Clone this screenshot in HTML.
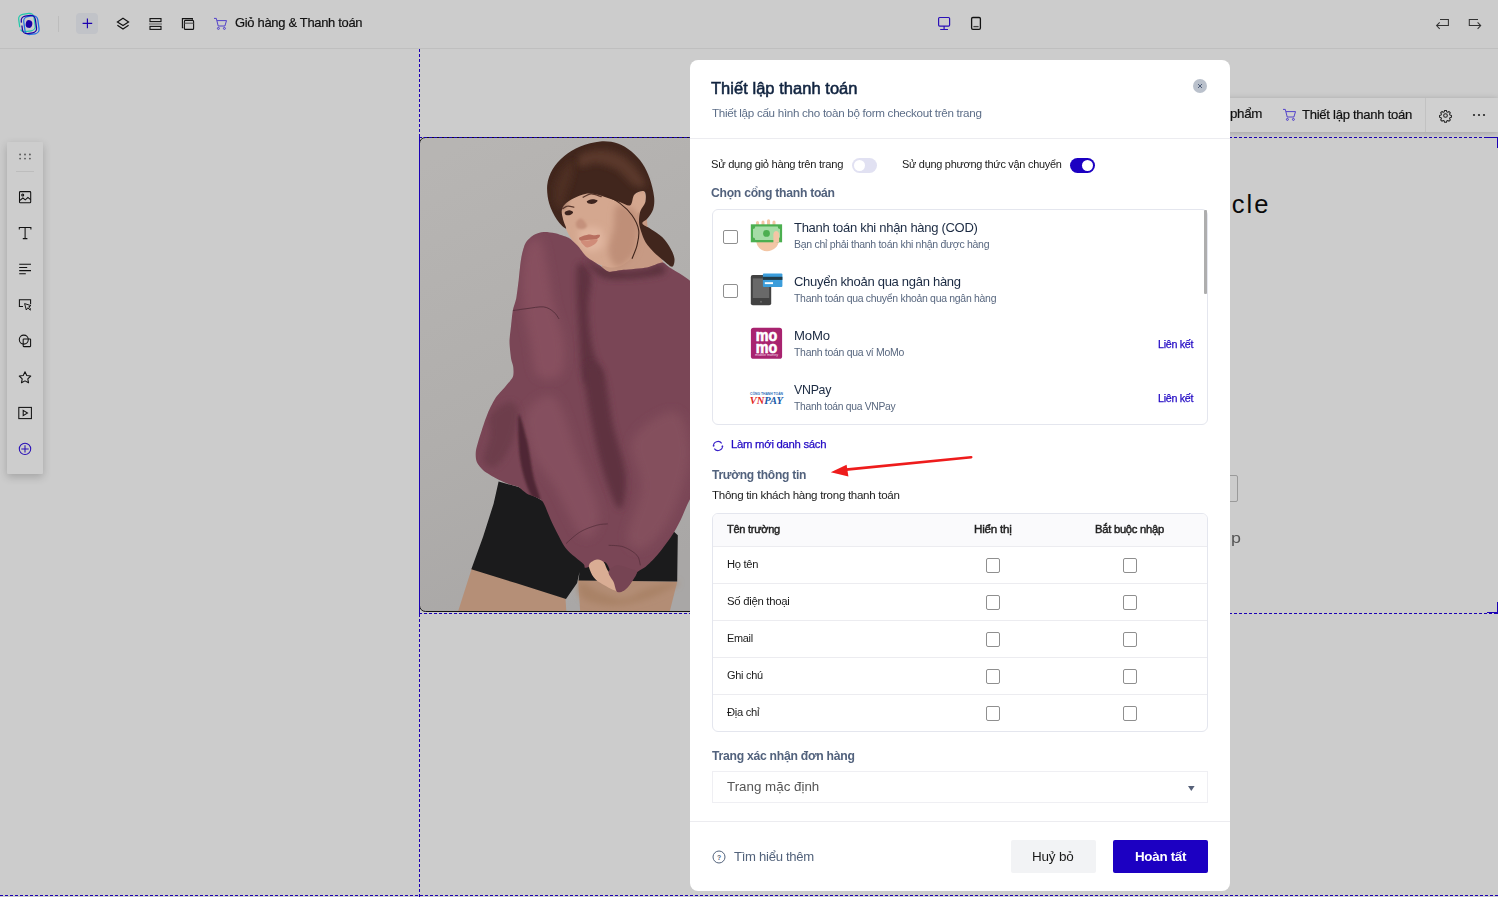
<!DOCTYPE html>
<html lang="vi">
<head>
<meta charset="utf-8">
<title>Thiết lập thanh toán</title>
<style>
*{box-sizing:border-box;margin:0;padding:0}
html,body{width:1498px;height:897px;overflow:hidden}
body{position:relative;background:#cccccc;font-family:"Liberation Sans",sans-serif;color:#111;font-size:12px}
.abs{position:absolute}
svg{display:block;overflow:visible}
/* top bar */
#topbar{position:absolute;left:0;top:0;width:1498px;height:49px;background:#cccccc;border-bottom:1px solid #bfbfbf}
#topbar .ic{position:absolute}
#plusbtn{position:absolute;left:76px;top:13px;width:22px;height:21px;border-radius:4px;background:#c1c3c8}
#pagetitle{position:absolute;left:235.3px;top:15.9px;font-size:13px;line-height:13px;color:#111;-webkit-text-stroke:.2px #111;white-space:nowrap;letter-spacing:-0.3px;transform:scaleX(.995);transform-origin:0 50%}
/* left toolbar */
#ltool{position:absolute;left:7px;top:142px;width:36px;height:332px;background:#cdcdcd;border-radius:1px;box-shadow:0 3px 9px rgba(0,0,0,.2)}
#ltool .ic{position:absolute;left:10px}
/* canvas guides */
.vdash{position:absolute;width:0;border-left:1px dashed #1a00b4}
.hdash{position:absolute;height:0;border-top:1px dashed #1a00b4}
.vd{position:absolute;width:1px;background:repeating-linear-gradient(to bottom,#1a00b4 0 3px,transparent 3px 5px)}
.hd{position:absolute;height:1px;background:repeating-linear-gradient(to right,#1a00b4 0 3px,transparent 3px 5px)}
/* modal */
#modal{position:absolute;left:690px;top:60px;width:540px;height:831px;background:#fff;border-radius:8px;overflow:hidden}
#modal .t{position:absolute;white-space:nowrap}
.h1{left:22px;top:20px;font-size:17px;line-height:20px;font-weight:normal;-webkit-text-stroke:.55px #10233f;color:#10233f;letter-spacing:-0.35px}
.sub{left:22px;top:47px;font-size:11.5px;line-height:14px;color:#5d6e88;letter-spacing:-0.1px}
.hr{position:absolute;left:0;width:540px;height:1px;background:#ececf0}
.lab{font-size:11px;line-height:14px;color:#1a1a1a}
.sec{font-size:12.5px;line-height:15px;font-weight:bold;color:#52627d;letter-spacing:-0.3px}
.tog{position:absolute;width:25px;height:15px;border-radius:7.5px}
.tog i{position:absolute;top:2px;width:11px;height:11px;border-radius:50%;background:#fff}
.box{position:absolute;border:1px solid #e4e6ee;border-radius:6px;background:#fff}
.cb{position:absolute;width:15px;height:14px;border:1px solid #8f8f8f;border-radius:2px;background:#fff}
.pt{font-size:13px;line-height:16px;color:#1b2a42;letter-spacing:-0.15px}
.ps{font-size:10.5px;line-height:13px;color:#58677f;letter-spacing:-0.1px}
.lk{font-size:10.5px;line-height:13px;color:#2209c4;-webkit-text-stroke:.25px #2209c4}
.th{font-size:11px;line-height:14px;font-weight:normal;-webkit-text-stroke:.45px #222;color:#222;letter-spacing:-0.2px}
.td{font-size:11px;line-height:14px;color:#1a1a1a}
.rowline{position:absolute;left:0;width:494px;height:1px;background:#ececf0}
.cb2{position:absolute;width:14px;height:15px;border:1px solid #8f8f8f;border-radius:2px;background:#fff}
</style>
</head>
<body>

<!-- ===== TOP BAR ===== -->
<div id="topbar">
  <!-- logo -->
  <svg class="ic" style="left:17px;top:11px" width="24" height="26" viewBox="17 11 24 26" fill="none">
    <rect x="19.200" y="13.800" width="15.500" height="17.500" rx="4.600" stroke="#20c9aa" stroke-width="1.250" transform="rotate(-8 27 22.500)" stroke-dasharray="40 2.500 30"/>
    <rect x="24.300" y="16.200" width="14.200" height="18" rx="4.600" stroke="#1f6fe3" stroke-width="1.250" transform="rotate(-8 31.400 25.200)"/>
    <rect x="21.800" y="15.600" width="14.200" height="17.800" rx="4.600" stroke="#1c00a6" stroke-width="1.250" transform="rotate(-8 29 24.500)" stroke-dasharray="44 3 30"/>
    <ellipse cx="29" cy="24" rx="3.300" ry="3.900" fill="#1c00a6" transform="rotate(10 29 24)"/>
  </svg>
  <div class="abs" style="left:58px;top:16px;width:1px;height:16px;background:#bdbdbd"></div>
  <div id="plusbtn"></div>
  <svg class="ic" style="left:82px;top:18px" width="11" height="11" viewBox="0 0 11 11"><path d="M5.4 0.6v9.6M0.6 5.4h9.6" stroke="#1c00b0" stroke-width="1.15" fill="none"/></svg>
  <!-- layers -->
  <svg class="ic" style="left:116px;top:17px" width="14" height="14" viewBox="116 17 14 14" fill="none" stroke="#111" stroke-width="1.15" stroke-linejoin="miter"><path d="M123 18.3l5.6 3.6-5.6 3.6-5.6-3.6z"/><path d="M117.4 25.3l5.6 3.7 5.6-3.7"/></svg>
  <!-- stack -->
  <svg class="ic" style="left:148px;top:17px" width="15" height="14" viewBox="148 17 15 14" fill="none" stroke="#111" stroke-width="1.1"><rect x="150" y="18.6" width="11" height="3"/><rect x="150" y="26.4" width="11" height="3"/><path d="M149 24h13" stroke="#666"/></svg>
  <!-- window -->
  <svg class="ic" style="left:181px;top:17px" width="14" height="14" viewBox="181 17 14 14" fill="none" stroke="#111" stroke-width="1.1"><path d="M183.2 27.6h-0.8v-9h10v1.2"/><rect x="184.4" y="20.4" width="9.2" height="9" rx="1"/><path d="M184.4 23.2h9.2" stroke="#555"/></svg>
  <!-- cart -->
  <svg class="ic" style="left:213px;top:17px" width="15" height="14" viewBox="213 17 15 14" fill="none" stroke="#412dca" stroke-width=".88"><path d="M214 18.4h2.3l1.9 7.6h6.7l1.6-5.4h-9.4"/><circle cx="218.4" cy="28.4" r="1"/><circle cx="224.4" cy="28.4" r="1"/></svg>
  <div id="pagetitle">Giỏ hàng &amp; Thanh toán</div>
  <!-- desktop -->
  <svg class="ic" style="left:937px;top:16px" width="15" height="15" viewBox="937 16 15 15" fill="none" stroke="#2a10b8" stroke-width="1.2"><rect x="938.6" y="17.5" width="11" height="8.6" rx="1"/><path d="M944.1 26.1v3.2M940.2 29.5h7.8"/></svg>
  <!-- mobile -->
  <svg class="ic" style="left:970px;top:16px" width="12" height="15" viewBox="970 16 12 15" fill="none" stroke="#111" stroke-width="1.3"><rect x="971.6" y="17.5" width="8.8" height="11.9" rx="1.3"/><path d="M973.4 26.6h5.2" stroke="#444"/></svg>
  <!-- undo/redo -->
  <svg class="ic" style="left:1435px;top:18px" width="15" height="12" viewBox="1435 18 15 12" fill="none" stroke="#333" stroke-width="1.05"><path d="M1440 19.4h8.4v6.2h-11.6M1439.7 22.4l-3.1 3.2 3.1 3.2"/></svg>
  <svg class="ic" style="left:1468px;top:18px" width="15" height="12" viewBox="1468 18 15 12" fill="none" stroke="#333" stroke-width="1.05"><path d="M1478 19.4h-8.7v6.2h11.5M1477.6 22.4l3.1 3.2-3.1 3.2"/></svg>
</div>

<!-- ===== LEFT TOOLBAR ===== -->
<div id="ltool">
  <svg class="abs" style="left:0;top:0" width="36" height="332" viewBox="7 142 36 332" fill="none" stroke="#111" stroke-width="1.05">
    <g fill="#5a5a5a" stroke="none"><circle cx="20.100" cy="154.500" r=".95"/><circle cx="25" cy="154.500" r=".95"/><circle cx="29.900" cy="154.500" r=".95"/><circle cx="20.100" cy="158.600" r=".95"/><circle cx="25" cy="158.600" r=".95"/><circle cx="29.900" cy="158.600" r=".95"/></g>
    <path d="M16 171.5h18" stroke="#bdbdbd"/>
    <!-- image -->
    <rect x="19.5" y="191.6" width="11.2" height="11.2" rx=".8"/><circle cx="22.7" cy="195" r="1"/><path d="M19.6 200.6l3.3-2.6 2.4 1.8 2.6-2.4 2.7 2.3"/>
    <!-- T -->
    <path d="M19.3 229.4v-1.8h11.6v1.8M25.1 227.6v11M22.8 238.6h4.6" />
    <!-- paragraph -->
    <path d="M19.2 264.2h11.8M19.2 267.4h8M19.2 270.6h11.8M19.2 273.8h6.6"/>
    <!-- button -->
    <path d="M23 306.4h-3.6v-6.6h11.2v4.4"/><path d="M24.6 303.6l1.7 6.4 1.5-2.2 2.3 2.4.9-.9-2.3-2.3 2.2-1.4z" stroke-width=".95"/>
    <!-- shapes -->
    <circle cx="23.8" cy="339.6" r="4.5"/><rect x="23.2" y="339" width="7.4" height="7.6" rx=".6"/>
    <!-- star -->
    <path d="M25 371.8l1.75 3.7 4 .5-2.95 2.8.75 4L25 380.9l-3.55 1.9.75-4-2.95-2.8 4-.5z" stroke-linejoin="round"/>
    <!-- video -->
    <rect x="18.8" y="407.4" width="12.6" height="11.2"/><path d="M23.2 410.4v5.2l4.3-2.6z"/>
    <!-- plus circle -->
    <g stroke="#2a10b8"><circle cx="25" cy="448.9" r="5.7"/><path d="M25 445.200v7.400M21.300 448.900h7.400"/></g>
  </svg>
</div>

<!-- ===== CANVAS ===== -->
<div id="canvas">
  <!-- photo -->
  <svg class="abs" id="photo" style="left:419px;top:137px" width="281" height="476" viewBox="419 137 281 476">
    <defs><clipPath id="pc"><rect x="419.500" y="137.500" width="290" height="474" rx="6"/></clipPath></defs>
    <g clip-path="url(#pc)">
    <!--PHOTO_START-->
<defs><linearGradient id="bgG" x1="0.2" y1="0" x2="0.5" y2="1"><stop offset="0" stop-color="#b7b5b3"/><stop offset="0.55" stop-color="#b0aeac"/><stop offset="1" stop-color="#a9a7a6"/></linearGradient><filter id="b1" x="-20%" y="-20%" width="140%" height="140%"><feGaussianBlur stdDeviation="1.2"/></filter><filter id="b3" x="-30%" y="-30%" width="160%" height="160%"><feGaussianBlur stdDeviation="3"/></filter><filter id="b5" x="-30%" y="-30%" width="160%" height="160%"><feGaussianBlur stdDeviation="5"/></filter></defs>
<rect x="419" y="137" width="290" height="476" fill="url(#bgG)"/>
<path d="M630.3 205.2C636.2 198.5 642.6 199.1 645.4 201.9C648.2 204.7 646.2 215.3 647.1 222.0C647.9 228.6 647.6 235.1 650.4 242.0C653.2 249.0 662.7 258.2 663.8 263.8C664.9 269.3 663.8 273.0 657.1 275.5C650.4 278.0 632.8 279.1 623.6 278.8C614.4 278.5 604.1 279.9 601.9 273.8C599.7 267.7 605.5 253.5 610.3 242.0C615.0 230.6 624.5 211.9 630.3 205.2Z" fill="#c79a84"/>
<path d="M560.9 209.4C561.6 206.5 563.0 203.7 566.0 201.1C568.9 198.4 573.9 195.1 578.5 193.5C583.1 192.0 588.5 191.6 593.5 191.9C598.6 192.1 603.6 193.9 608.6 195.2C613.6 196.5 619.5 199.5 623.6 199.4C627.8 199.2 630.3 195.8 633.7 194.4C637.0 193.0 641.7 190.0 643.7 191.0C645.7 192.0 646.1 197.0 645.7 200.2C645.4 203.4 643.2 207.9 641.7 210.3C640.3 212.6 637.9 211.4 637.0 214.4C636.1 217.5 636.2 223.5 636.2 228.6C636.2 233.8 638.0 240.4 637.0 245.4C636.0 250.4 633.7 255.1 630.3 258.7C627.0 262.4 621.7 266.0 617.0 267.1C612.2 268.2 606.6 266.8 601.9 265.4C597.2 264.0 592.4 261.5 588.5 258.7C584.6 256.0 581.6 252.3 578.5 248.7C575.4 245.1 572.3 240.5 570.1 237.0C568.0 233.5 566.8 230.9 565.5 227.8C564.1 224.7 562.5 221.7 561.8 218.6C561.0 215.5 560.2 212.3 560.9 209.4Z" fill="#d4a78f"/>
<path d="M617.0 205.2C620.9 202.7 633.7 206.9 637.0 213.6C640.4 220.3 638.1 237.8 637.0 245.4C635.9 252.9 633.7 255.1 630.3 258.7C627.0 262.4 620.6 268.2 617.0 267.1C613.3 266.0 609.2 258.5 608.6 252.1C608.0 245.6 612.2 236.4 613.6 228.6C615.0 220.8 613.1 207.7 617.0 205.2Z" fill="#bf8f78" filter="url(#b3)"/>
<path d="M580.2 228.6C583.5 226.1 596.3 225.9 600.2 228.6C604.1 231.4 605.3 241.5 603.6 245.4C601.9 249.3 594.1 252.3 590.2 252.1C586.3 251.8 581.8 247.6 580.2 243.7C578.5 239.8 576.8 231.2 580.2 228.6Z" fill="#e0b59f" filter="url(#b3)"/>
<path d="M564.8 212.3C565.3 211.5 567.9 210.3 569.3 210.3C570.7 210.3 573.0 211.5 573.1 212.3C573.3 213.0 571.3 214.5 570.1 214.9C568.9 215.4 566.8 215.4 566.0 214.9C565.1 214.5 564.2 213.0 564.8 212.3Z" fill="#3d241e"/>
<path d="M586.9 201.2C587.4 200.5 590.4 199.3 592.2 199.2C594.0 199.1 597.2 199.8 597.6 200.6C597.9 201.3 595.7 203.1 594.2 203.6C592.8 204.1 590.1 204.0 588.9 203.6C587.6 203.2 586.3 201.9 586.9 201.2Z" fill="#3d241e"/>
<path d="M562.8 208.6C563.6 208.2 565.8 206.3 567.6 206.1C569.5 205.8 572.8 207.0 573.8 207.2" fill="none" stroke="#5a382d" stroke-width="1.3" stroke-linecap="round"/>
<path d="M583.2 197.2C584.5 196.6 588.1 194.0 591.0 193.9C594.0 193.8 599.4 196.1 601.1 196.5" fill="none" stroke="#5a382d" stroke-width="1.3" stroke-linecap="round"/>
<path d="M579.3 237.7C580.4 236.7 585.3 235.1 587.7 234.7C590.1 234.3 591.5 235.3 593.5 235.3C595.6 235.4 599.3 234.4 599.9 235.0C600.5 235.6 599.1 238.2 596.9 239.0C594.7 239.8 589.5 239.7 586.9 240.0C584.2 240.3 582.3 241.1 581.0 240.7C579.7 240.3 578.2 238.7 579.3 237.7Z" fill="#b86f60"/>
<path d="M581.0 241.0C581.8 240.3 585.0 240.6 587.7 240.4C590.4 240.1 595.9 238.8 597.2 239.3C598.5 239.8 597.1 242.0 595.6 243.4C594.0 244.7 589.8 247.2 587.7 247.4C585.6 247.6 584.3 245.8 583.2 244.7C582.1 243.6 580.3 241.7 581.0 241.0Z" fill="#d08c79"/>
<path d="M576.0 222.8C576.6 221.2 579.2 218.2 581.0 218.6C582.8 219.0 586.4 223.6 586.9 225.3C587.3 227.0 585.1 228.5 583.5 229.0C581.9 229.4 578.6 229.0 577.3 228.0C576.1 226.9 575.4 224.4 576.0 222.8Z" fill="#c4917b" filter="url(#b1)"/>
<path d="M566.0 228.6C564.9 228.6 559.5 223.6 556.8 219.4C554.0 215.3 550.8 209.3 549.2 203.6C547.6 197.8 546.7 190.9 547.2 185.2C547.8 179.5 549.7 174.2 552.6 169.3C555.4 164.4 559.7 159.7 564.3 155.9C568.9 152.1 574.2 148.8 580.2 146.4C586.2 143.9 594.0 141.9 600.2 141.4C606.5 140.9 612.6 141.7 617.8 143.4C622.9 145.0 627.1 147.9 631.2 151.2C635.3 154.6 639.3 158.9 642.4 163.4C645.5 168.0 647.8 172.9 649.7 178.5C651.7 184.1 653.5 191.7 654.1 196.9C654.6 202.0 654.2 205.8 653.1 209.4C652.0 213.0 649.2 216.2 647.4 218.6C645.6 221.0 641.8 221.9 642.4 223.6C642.9 225.4 647.4 226.7 650.7 229.0C654.1 231.3 659.1 234.0 662.4 237.3C665.8 240.7 668.8 245.4 670.8 249.0C672.8 252.7 674.3 256.1 674.5 259.1C674.7 262.0 673.9 266.5 672.1 266.8C670.4 267.1 666.8 263.1 663.8 260.8C660.8 258.4 657.1 255.5 654.1 252.4C651.1 249.3 647.8 245.7 645.7 242.4C643.6 239.0 642.5 235.7 641.4 232.3C640.3 229.0 639.2 225.8 639.0 222.3C638.9 218.8 639.3 214.5 640.4 211.1C641.4 207.7 644.7 205.2 645.4 201.9C646.1 198.6 646.2 192.8 644.4 191.5C642.6 190.3 636.9 192.1 634.5 194.4C632.2 196.6 632.7 203.9 630.3 205.2C628.0 206.5 623.9 203.4 620.3 202.2C616.7 201.1 612.5 199.5 608.6 198.2C604.7 196.9 600.8 195.3 596.9 194.5C593.0 193.8 589.0 193.2 585.2 193.9C581.3 194.5 577.2 196.5 573.8 198.2C570.5 199.9 567.1 201.8 565.1 203.9C563.1 206.0 562.1 208.0 561.8 210.6C561.4 213.2 562.4 216.4 563.1 219.4C563.8 222.5 567.0 228.6 566.0 228.6Z" fill="#41261d"/>
<path d="M580.2 155.1C583.8 152.3 594.7 149.8 601.9 150.1C609.2 150.3 617.5 153.1 623.6 156.7C629.8 160.4 635.1 167.1 638.7 171.8C642.3 176.5 646.2 182.9 645.4 185.2C644.5 187.4 638.4 187.7 633.7 185.2C628.9 182.7 623.1 173.7 617.0 170.1C610.8 166.5 603.0 164.0 596.9 163.4C590.8 162.9 583.0 168.2 580.2 166.8C577.4 165.4 576.5 157.9 580.2 155.1Z" fill="#5a382b" filter="url(#b3)"/>
<path d="M555.1 185.2C556.5 179.6 560.4 172.3 563.4 168.4C566.5 164.5 572.1 160.1 573.5 161.8C574.9 163.4 573.1 172.9 571.8 178.5C570.6 184.1 567.6 190.2 566.0 195.2C564.3 200.2 563.6 207.5 561.8 208.6C560.0 209.7 556.2 205.8 555.1 201.9C554.0 198.0 553.7 190.7 555.1 185.2Z" fill="#4e2f24" filter="url(#b3)"/>
<path d="M603.6 193.9C606.4 195.5 615.6 200.0 620.3 203.6C625.0 207.1 628.9 210.8 632.0 215.3C635.1 219.7 637.9 225.3 638.7 230.3C639.5 235.3 638.1 240.6 637.0 245.4C635.9 250.1 632.8 256.5 632.0 258.7" fill="none" stroke="#3f251c" stroke-width="1.1"/>
<path d="M471.8 568.3 L566.0 598.4 L565.5 598.8 L566.5 613.8 L456.0 617.9Z" fill="#b58f77"/>
<path d="M578.2 580.1 L677.2 581.7 L669.6 612.2 L580.2 612.2Z" fill="#b38d75"/>
<path d="M580.2 582.1C583.0 580.9 593.0 589.3 600.2 592.1C607.5 594.9 615.8 599.3 623.6 598.8C631.4 598.2 638.7 591.5 647.1 588.7C655.4 586.0 669.1 582.6 673.8 582.1C678.6 581.5 679.9 582.6 675.5 585.4C671.0 588.2 657.4 595.4 647.1 598.8C636.7 602.1 624.2 605.5 613.6 605.5C603.0 605.5 589.1 602.7 583.5 598.8C577.9 594.9 577.4 583.2 580.2 582.1Z" fill="#a98266" filter="url(#b3)"/>
<path d="M498.6 481.4 L493.6 503.7 L483.0 537.1 L471.3 569.2 L515.8 583.1 L566.0 599.0 L577.1 583.1 L579.5 572.0 L578.5 580.4 L677.2 581.4 L677.8 535.2 L673.8 531.6 L630.3 506.8 L563.4 506.8 L542.0 500.5 L518.6 487.1Z" fill="#1b1b1c"/>
<clipPath id="swc"><path d="M555.1 233.3C558.2 234.1 565.6 236.3 568.5 237.8C571.3 239.4 575.4 243.3 577.7 245.7C580.0 248.1 584.0 254.6 586.9 257.1C589.7 259.6 597.5 263.9 600.2 265.8C603.0 267.6 605.7 271.3 608.6 271.8C611.5 272.3 618.8 270.3 623.6 269.8C628.5 269.2 642.2 268.4 647.1 267.4C651.9 266.5 659.3 262.4 662.1 262.4C664.9 262.4 666.1 265.1 669.6 267.4C673.1 269.7 686.2 276.7 690.0 280.8C693.8 284.9 698.8 273.9 700.0 300.0C701.2 326.1 701.2 465.1 700.0 490.0C698.8 514.9 692.5 495.5 690.0 499.3C687.6 503.1 682.7 515.7 680.5 520.2C678.3 524.7 675.1 530.8 672.1 535.2C669.2 539.6 660.4 551.3 657.1 555.3C653.7 559.3 647.9 564.9 645.4 567.0C642.9 569.1 639.2 569.9 637.4 572.0C635.5 574.1 632.0 581.4 630.3 583.7C628.7 586.0 625.7 589.5 624.0 590.4C622.3 591.4 618.5 593.5 617.0 591.4C615.4 589.3 612.8 577.4 611.3 573.7C609.7 570.0 607.6 562.7 604.4 562.0C601.3 561.3 588.7 567.6 586.0 567.8C583.4 568.1 585.7 566.1 583.2 563.7C580.7 561.3 569.9 553.8 566.0 548.6C562.0 543.4 554.7 527.8 551.7 521.9C548.7 515.9 545.1 504.3 542.0 500.8C538.9 497.3 529.9 495.5 527.0 493.8C524.0 492.1 520.7 488.2 518.6 487.1C516.5 485.9 513.0 485.6 510.2 484.6C507.5 483.5 500.2 480.5 496.9 478.7C493.5 477.0 486.0 472.5 483.5 470.4C481.0 468.3 477.7 464.5 476.8 462.0C475.8 459.5 475.3 454.3 476.0 450.3C476.6 446.3 480.3 434.8 481.8 430.2C483.3 425.6 486.0 417.5 487.7 413.5C489.3 409.5 493.0 401.8 495.2 398.5C497.4 395.1 503.0 389.5 505.2 386.8C507.4 384.0 511.9 379.2 512.9 376.7C513.9 374.2 513.5 368.9 513.2 366.7C513.0 364.4 511.6 361.9 511.1 358.8C510.7 355.7 509.5 346.2 509.5 342.1C509.5 337.9 510.7 329.3 511.1 325.3C511.6 321.4 512.2 314.0 512.8 310.6C513.4 307.3 515.4 302.4 516.2 298.6C516.9 294.8 518.0 285.2 518.7 280.2C519.3 275.2 520.3 263.0 521.2 258.4C522.0 253.8 523.8 246.3 525.4 243.4C526.9 240.5 531.4 236.5 533.7 235.0C536.0 233.6 541.1 232.2 543.7 232.0C546.4 231.8 552.0 232.6 555.1 233.3Z"/></clipPath>
<path d="M555.1 233.3C558.2 234.1 565.6 236.3 568.5 237.8C571.3 239.4 575.4 243.3 577.7 245.7C580.0 248.1 584.0 254.6 586.9 257.1C589.7 259.6 597.5 263.9 600.2 265.8C603.0 267.6 605.7 271.3 608.6 271.8C611.5 272.3 618.8 270.3 623.6 269.8C628.5 269.2 642.2 268.4 647.1 267.4C651.9 266.5 659.3 262.4 662.1 262.4C664.9 262.4 666.1 265.1 669.6 267.4C673.1 269.7 686.2 276.7 690.0 280.8C693.8 284.9 698.8 273.9 700.0 300.0C701.2 326.1 701.2 465.1 700.0 490.0C698.8 514.9 692.5 495.5 690.0 499.3C687.6 503.1 682.7 515.7 680.5 520.2C678.3 524.7 675.1 530.8 672.1 535.2C669.2 539.6 660.4 551.3 657.1 555.3C653.7 559.3 647.9 564.9 645.4 567.0C642.9 569.1 639.2 569.9 637.4 572.0C635.5 574.1 632.0 581.4 630.3 583.7C628.7 586.0 625.7 589.5 624.0 590.4C622.3 591.4 618.5 593.5 617.0 591.4C615.4 589.3 612.8 577.4 611.3 573.7C609.7 570.0 607.6 562.7 604.4 562.0C601.3 561.3 588.7 567.6 586.0 567.8C583.4 568.1 585.7 566.1 583.2 563.7C580.7 561.3 569.9 553.8 566.0 548.6C562.0 543.4 554.7 527.8 551.7 521.9C548.7 515.9 545.1 504.3 542.0 500.8C538.9 497.3 529.9 495.5 527.0 493.8C524.0 492.1 520.7 488.2 518.6 487.1C516.5 485.9 513.0 485.6 510.2 484.6C507.5 483.5 500.2 480.5 496.9 478.7C493.5 477.0 486.0 472.5 483.5 470.4C481.0 468.3 477.7 464.5 476.8 462.0C475.8 459.5 475.3 454.3 476.0 450.3C476.6 446.3 480.3 434.8 481.8 430.2C483.3 425.6 486.0 417.5 487.7 413.5C489.3 409.5 493.0 401.8 495.2 398.5C497.4 395.1 503.0 389.5 505.2 386.8C507.4 384.0 511.9 379.2 512.9 376.7C513.9 374.2 513.5 368.9 513.2 366.7C513.0 364.4 511.6 361.9 511.1 358.8C510.7 355.7 509.5 346.2 509.5 342.1C509.5 337.9 510.7 329.3 511.1 325.3C511.6 321.4 512.2 314.0 512.8 310.6C513.4 307.3 515.4 302.4 516.2 298.6C516.9 294.8 518.0 285.2 518.7 280.2C519.3 275.2 520.3 263.0 521.2 258.4C522.0 253.8 523.8 246.3 525.4 243.4C526.9 240.5 531.4 236.5 533.7 235.0C536.0 233.6 541.1 232.2 543.7 232.0C546.4 231.8 552.0 232.6 555.1 233.3Z" fill="#7a4656"/>
<g clip-path="url(#swc)">
<path d="M578.5 263.7C580.9 261.8 589.4 267.4 591.1 274.8C592.7 282.3 588.0 296.2 588.3 308.3C588.5 320.3 590.1 335.3 592.5 347.3C594.8 359.2 603.6 374.4 602.2 379.9C600.8 385.3 588.0 389.0 584.1 379.9C580.1 370.7 579.8 340.6 578.5 325.0C577.3 309.3 576.6 296.2 576.6 286.0C576.6 275.8 576.1 265.6 578.5 263.7Z" fill="#5e3341" filter="url(#b3)"/>
<path d="M584.1 370.0C585.5 359.3 597.3 360.7 602.2 370.0C607.1 379.3 609.4 408.1 613.3 425.7C617.3 443.4 624.7 461.9 625.9 475.8C627.0 489.8 623.6 508.3 620.3 509.3C617.1 510.2 610.8 494.0 606.4 481.4C602.0 468.9 597.6 452.6 593.8 434.1C590.1 415.5 582.7 380.7 584.1 370.0Z" fill="#5e3341" filter="url(#b3)"/>
<path d="M585.2 258.7C584.9 257.1 593.8 265.0 600.2 267.1C606.6 269.2 615.8 271.0 623.6 271.3C631.4 271.6 640.9 270.0 647.1 268.8C653.2 267.5 657.6 262.9 660.4 263.8C663.2 264.6 668.8 271.3 663.8 273.8C658.8 276.3 640.6 278.3 630.3 278.8C620.0 279.4 609.4 280.5 601.9 277.1C594.4 273.8 585.5 260.4 585.2 258.7Z" fill="#5c313e" filter="url(#b3)"/>
<path d="M527.0 245.1C530.1 239.2 537.1 236.4 540.4 240.1C543.7 243.7 544.9 255.9 547.1 266.8C549.3 277.7 551.0 292.7 553.8 305.3C556.6 317.8 562.7 330.4 563.8 342.1C564.9 353.7 564.9 369.5 560.5 375.0C556.0 380.5 542.1 380.5 537.1 375.0C532.0 369.5 532.6 353.1 530.4 342.1C528.1 331.0 525.1 319.8 523.7 308.6C522.3 297.5 521.4 285.8 522.0 275.2C522.6 264.6 524.0 250.9 527.0 245.1Z" fill="#87505f" filter="url(#b5)"/>
<path d="M527.0 411.8C530.7 402.5 546.5 390.9 554.8 397.9C563.2 404.8 569.7 434.1 577.1 453.6C584.6 473.1 598.5 500.9 599.4 514.8C600.3 528.8 590.1 541.8 582.7 537.1C575.3 532.5 563.2 500.9 554.8 487.0C546.5 473.1 537.2 466.1 532.6 453.6C527.9 441.0 523.3 421.1 527.0 411.8Z" fill="#85505e" filter="url(#b5)"/>
<path d="M632.8 439.6C638.4 427.1 665.2 409.5 674.6 411.8C684.0 414.1 689.9 436.4 689.4 453.6C688.9 470.7 679.4 499.1 671.8 514.8C664.3 530.6 651.4 544.6 644.0 548.3C636.6 552.0 627.7 547.3 627.3 537.1C626.8 526.9 640.3 503.2 641.2 487.0C642.1 470.7 627.3 452.2 632.8 439.6Z" fill="#84505d" filter="url(#b5)"/>
<path d="M490.2 415.2C493.5 409.6 505.5 401.8 510.2 401.8C515.0 401.8 518.6 407.7 518.6 415.2C518.6 422.7 514.1 438.3 510.2 447.0C506.3 455.6 499.6 464.8 495.2 467.0C490.7 469.3 484.3 465.6 483.5 460.3C482.6 455.0 489.1 442.8 490.2 435.3C491.3 427.7 486.8 420.8 490.2 415.2Z" fill="#6d3e4c" filter="url(#b3)"/>
<path d="M518.6 415.2C519.7 411.8 524.4 430.0 527.0 440.3C529.5 450.6 531.4 467.0 533.6 477.1C535.9 487.1 540.9 497.7 540.3 500.5C539.8 503.3 533.6 500.5 530.3 493.8C527.0 487.1 522.2 473.4 520.3 460.3C518.3 447.2 517.5 418.5 518.6 415.2Z" fill="#4f2834" filter="url(#b1)"/>
<path d="M512.8 310.6C515.2 310.3 521.9 309.2 527.0 308.6C532.2 308.0 539.3 306.4 543.7 306.9C548.2 307.5 551.2 309.9 553.8 312.0C556.3 314.0 558.2 317.8 559.1 319.0" fill="none" stroke="#56303c" stroke-width=".9"/>
<path d="M566.0 543.6C568.3 541.6 575.0 535.0 580.2 531.9C585.3 528.8 592.3 526.5 596.9 525.2C601.5 523.9 605.9 524.1 607.8 523.9" fill="none" stroke="#57303c" stroke-width=".8"/>
<path d="M608.6 545.3C611.1 545.5 618.9 545.3 623.6 546.9C628.4 548.6 634.2 552.2 637.0 555.3C639.8 558.4 639.8 563.7 640.4 565.3" fill="none" stroke="#57303c" stroke-width=".8"/>
</g>
<path d="M589.4 564.0C590.5 562.1 594.5 559.8 596.9 559.5C599.3 559.1 601.6 559.9 603.6 562.0C605.6 564.1 606.1 569.0 608.9 572.0C611.7 575.1 617.8 578.1 620.3 580.4C622.8 582.7 624.5 584.0 624.0 585.7C623.4 587.5 620.1 590.8 617.0 590.8C613.8 590.8 608.9 587.7 605.3 585.7C601.6 583.8 597.7 581.6 595.2 579.0C592.7 576.5 591.2 573.2 590.2 570.7C589.2 568.2 588.2 565.9 589.4 564.0Z" fill="#d9ad94"/>
<path d="M608.6 572.0C609.2 569.2 613.3 565.9 617.0 565.3C620.6 564.8 627.0 567.6 630.3 568.7C633.7 569.8 637.0 569.5 637.0 572.0C637.0 574.6 632.5 581.0 630.3 584.1C628.2 587.1 626.2 589.2 624.0 590.4C621.8 591.6 618.7 592.8 617.0 591.4C615.2 590.0 615.0 585.3 613.6 582.1C612.2 578.8 608.0 574.8 608.6 572.0Z" fill="#764453"/>
<!--PHOTO_END-->
    </g>
    <rect x="419.500" y="137.500" width="290" height="474" rx="6" fill="none" stroke="#161616" stroke-width="1"/>
  </svg>
  <!-- guides -->
  <div class="vd" style="left:419px;top:49px;height:848px"></div>
  <div class="hd" style="left:419px;top:137px;width:1079px"></div>
  <div class="hd" style="left:419px;top:613px;width:1079px"></div>
  <div class="hd" style="left:0;top:895px;width:1498px"></div>
  <div class="abs" style="left:419px;top:137px;width:1px;height:477px;background:#1a00b4"></div>
  <!-- corner handles -->
  <div class="abs" style="left:1487px;top:137px;width:11px;height:1px;background:#1a00b4"></div>
  <div class="abs" style="left:1497px;top:137px;width:1px;height:11px;background:#1a00b4"></div>
  <div class="abs" style="left:1487px;top:612px;width:11px;height:1px;background:#1a00b4"></div>
  <div class="abs" style="left:1497px;top:602px;width:1px;height:12px;background:#1a00b4"></div>
  <!-- right canvas bits -->
  <div class="abs" id="rtool" style="left:1180px;top:98px;width:318px;height:34px;background:#d0d0d0;box-shadow:0 1px 6px rgba(0,0,0,.22)">
    <div class="abs" id="rt_a" style="-webkit-text-stroke:.2px #111;left:50.2px;top:9.4px;font-size:13.5px;line-height:13.5px;color:#111;white-space:nowrap;letter-spacing:-.3px;transform:scaleX(.988);transform-origin:0 50%">phẩm</div>
    <svg class="abs" style="left:102px;top:10px" width="15" height="14" viewBox="213 17 15 14" fill="none" stroke="#412dca" stroke-width=".88"><path d="M214 18.4h2.3l1.9 7.6h6.7l1.6-5.4h-9.4"/><circle cx="218.4" cy="28.4" r="1"/><circle cx="224.4" cy="28.4" r="1"/></svg>
    <div class="abs" id="rt_b" style="-webkit-text-stroke:.2px #111;left:121.5px;top:9.6px;font-size:13.5px;line-height:13.5px;color:#111;white-space:nowrap;letter-spacing:-.3px;transform:scaleX(.971);transform-origin:0 50%">Thiết lập thanh toán</div>
    <div class="abs" style="left:245px;top:0;width:1px;height:34px;background:#c2c2c2"></div>
    <svg class="abs" style="left:258.800px;top:10.700px" width="13" height="13" viewBox="0 0 24 24" fill="none" stroke="#222" stroke-width="1.9"><circle cx="12" cy="12" r="3.4"/><path d="M10.3 2.6h3.4l.6 2.7 1.9.8 2.4-1.5 2.4 2.4-1.5 2.4.8 1.9 2.7.6v3.4l-2.7.6-.8 1.9 1.5 2.4-2.4 2.4-2.4-1.5-1.9.8-.6 2.7h-3.4l-.6-2.7-1.9-.8-2.4 1.5-2.4-2.4 1.5-2.4-.8-1.9-2.7-.6v-3.400l2.700-.600.800-1.900-1.500-2.400 2.400-2.400 2.400 1.500 1.900-.800z" stroke-linejoin="round"/></svg>
    <svg class="abs" style="left:292px;top:15px" width="14" height="4" viewBox="0 0 14 4"><circle cx="2" cy="2" r="1.1" fill="#222"/><circle cx="7" cy="2" r="1.1" fill="#222"/><circle cx="12" cy="2" r="1.1" fill="#222"/></svg>
  </div>
  <div class="abs" id="cycle" style="left:1217px;top:190.800px;font-size:25.500px;line-height:26px;color:#0a0a0a;white-space:nowrap;letter-spacing:2px">ycle</div>
  <div class="abs" style="left:1150px;top:475px;width:88px;height:27px;border:1px solid #9a9a9a;border-radius:2px"></div>
  <div class="abs" id="pchar" style="left:1231px;top:531.300px;font-size:14.300px;line-height:14.300px;color:#555;transform:scaleX(1.25);transform-origin:0 50%">p</div>
</div>

<!-- ===== MODAL ===== -->
<div id="modal">
  <div class="t h1" id="m_h1" style="left:21.3px;top:19.7px;font-size:16.5px;line-height:16.5px;letter-spacing:0.04px;transform:scaleX(0.999);transform-origin:0 50%">Thiết lập thanh toán</div>
  <div class="t sub" id="m_sub" style="left:21.7px;top:47.3px;font-size:11.7px;line-height:11.7px;letter-spacing:-0.3px;transform:scaleX(0.996);transform-origin:0 50%">Thiết lập cấu hình cho toàn bộ form checkout trên trang</div>
  <div class="abs" id="closebtn" style="left:503px;top:19px;width:14px;height:14px;border-radius:50%;background:#bac1cc">
    <svg width="14" height="14" viewBox="0 0 14 14"><path d="M5 5l4 4M9 5l-4 4" stroke="#4e5d78" stroke-width="1" fill="none"/></svg>
  </div>
  <div class="hr" style="top:78px"></div>

  <!-- toggles -->
  <div class="t lab" id="m_l1" style="left:21.3px;top:98.2px;font-size:11.7px;line-height:11.7px;letter-spacing:-0.3px;transform:scaleX(0.956);transform-origin:0 50%">Sử dụng giỏ hàng trên trang</div>
  <div class="tog" style="left:162px;top:98px;background:#e1e1f2"><i style="left:2px"></i></div>
  <div class="t lab" id="m_l2" style="left:211.9px;top:98.2px;font-size:11.7px;line-height:11.7px;letter-spacing:-0.3px;transform:scaleX(0.937);transform-origin:0 50%">Sử dụng phương thức vận chuyển</div>
  <div class="tog" style="left:380px;top:98px;background:#1c00c2"><i style="left:12px"></i></div>

  <div class="t sec" id="m_s1" style="left:21.3px;top:126.2px;font-size:13.5px;line-height:13.5px;letter-spacing:-0.3px;transform:scaleX(0.902);transform-origin:0 50%">Chọn cổng thanh toán</div>

  <!-- gateway list -->
  <div class="box" style="left:22px;top:149px;width:496px;height:216px">
    <div class="abs" style="left:491px;top:0;width:3px;height:84px;background:#aeaeae;border-radius:1px"></div>
  </div>
  <div class="cb" style="left:33px;top:170px"></div>
  <div class="cb" style="left:33px;top:224px"></div>

  <div class="t pt" id="m_p1" style="left:103.7px;top:161.1px;font-size:13.2px;line-height:13.2px;letter-spacing:-0.3px;transform:scaleX(0.987);transform-origin:0 50%">Thanh toán khi nhận hàng (COD)</div>
  <div class="t ps" id="m_q1" style="left:103.7px;top:179.3px;font-size:10.8px;line-height:10.8px;letter-spacing:-0.3px;transform:scaleX(0.974);transform-origin:0 50%">Bạn chỉ phải thanh toán khi nhận được hàng</div>
  <div class="t pt" id="m_p2" style="left:103.7px;top:215.3px;font-size:13.2px;line-height:13.2px;letter-spacing:-0.3px;transform:scaleX(0.987);transform-origin:0 50%">Chuyển khoản qua ngân hàng</div>
  <div class="t ps" id="m_q2" style="left:103.7px;top:233.1px;font-size:10.8px;line-height:10.8px;letter-spacing:-0.3px;transform:scaleX(0.969);transform-origin:0 50%">Thanh toán qua chuyển khoản qua ngân hàng</div>
  <div class="t pt" id="m_p3" style="left:103.7px;top:268.9px;font-size:13.2px;line-height:13.2px;letter-spacing:-0.18px;transform:scaleX(0.997);transform-origin:0 50%">MoMo</div>
  <div class="t ps" id="m_q3" style="left:103.7px;top:287.1px;font-size:10.8px;line-height:10.8px;letter-spacing:-0.3px;transform:scaleX(0.97);transform-origin:0 50%">Thanh toán qua ví MoMo</div>
  <div class="t pt" id="m_p4" style="left:103.7px;top:322.8px;font-size:13.2px;line-height:13.2px;letter-spacing:-0.3px;transform:scaleX(0.939);transform-origin:0 50%">VNPay</div>
  <div class="t ps" id="m_q4" style="left:103.7px;top:340.9px;font-size:10.8px;line-height:10.8px;letter-spacing:-0.3px;transform:scaleX(0.954);transform-origin:0 50%">Thanh toán qua VNPay</div>
  <div class="t lk" id="m_k1" style="left:467.8px;top:278.7px;font-size:10.8px;line-height:10.8px;letter-spacing:-0.3px;transform:scaleX(0.994);transform-origin:0 50%">Liên kết</div>
  <div class="t lk" id="m_k2" style="left:467.8px;top:333.3px;font-size:10.8px;line-height:10.8px;letter-spacing:-0.3px;transform:scaleX(0.994);transform-origin:0 50%">Liên kết</div>

  <!-- gateway icons (page coords via viewBox) -->
  <svg class="abs" id="gwicons" style="left:58px;top:157px" width="38" height="200" viewBox="748 217 38 200">
    <!-- COD -->
    <g fill="#f3c6a5">
      <rect x="756" y="221" width="3" height="6" rx="1.5"/><rect x="761.5" y="220.4" width="3" height="6" rx="1.5"/><rect x="767" y="219.2" width="3.1" height="7" rx="1.5"/><rect x="772.5" y="220.4" width="3" height="6" rx="1.5"/>
      <path d="M756.2 241c.6 6 5 10.200 10.800 10.200 6.400 0 11.600-4.700 12.100-11.200z"/>
    </g>
    <rect x="750.800" y="224.300" width="31.300" height="18" fill="#4caf50"/>
    <path d="M755.200 226.500h22.600c0 1.700 .900 2.500 2.200 2.500v8.600c-1.300 0-2.200 .800-2.200 2.500h-22.600c0-1.700-.9-2.500-2.200-2.500v-8.600c1.300 0 2.200-.8 2.200-2.500z" fill="#a5dca6"/>
    <circle cx="766.500" cy="233.400" r="3.400" fill="#4caf50"/>
    <path d="M773.400 243.500v-9.300c0-1.800 1.200-3.200 2.800-3.200s2.900 1.400 2.900 3.200v7.800z" fill="#f3c6a5"/>
    <!-- phone + card -->
    <rect x="750.800" y="275" width="20.400" height="30.200" rx="2" fill="#424242"/>
    <rect x="752.800" y="278.400" width="16.400" height="19.600" fill="#696969"/>
    <circle cx="761" cy="301.800" r="1" fill="#6a6a6a"/>
    <rect x="762.900" y="273.500" width="19.500" height="13.600" rx="1" fill="#3b9ddb"/>
    <rect x="762.900" y="276.800" width="19.500" height="3.100" fill="#223b48"/>
    <rect x="764.800" y="282.200" width="8.200" height="1.900" fill="#fff"/>
    <!-- momo -->
    <rect x="750.900" y="327.800" width="31.200" height="31" rx="2.600" fill="#a8236f"/>
    <text x="766.600" y="341.400" text-anchor="middle" font-family="'Liberation Sans',sans-serif" font-weight="bold" font-size="17" fill="#fff" stroke="#fff" stroke-width=".7" textLength="21.500" lengthAdjust="spacingAndGlyphs">mo</text>
    <text x="766.600" y="352.600" text-anchor="middle" font-family="'Liberation Sans',sans-serif" font-weight="bold" font-size="17" fill="#fff" stroke="#fff" stroke-width=".7" textLength="21.500" lengthAdjust="spacingAndGlyphs">mo</text>
    <text x="766.600" y="356.400" text-anchor="middle" font-family="'Liberation Sans',sans-serif" font-size="3" fill="#f3d6e6" textLength="23" lengthAdjust="spacingAndGlyphs">mobile money</text>
    <!-- vnpay -->
    <text x="750" y="394.800" font-family="'Liberation Sans',sans-serif" font-weight="bold" font-size="3.400" fill="#2b6cb8" textLength="33" lengthAdjust="spacingAndGlyphs">CỔNG THANH TOÁN</text>
    <text x="749.800" y="403.600" font-family="'Liberation Serif',serif" font-weight="bold" font-style="italic" font-size="10.400" textLength="33" lengthAdjust="spacingAndGlyphs"><tspan fill="#e21f26">VN</tspan><tspan fill="#1a5aa8">PAY</tspan></text>
  </svg>
  <!-- refresh icon -->
  <svg class="abs" style="left:22px;top:380px" width="12" height="12" viewBox="712 440 12 12" fill="none" stroke="#3a22c8" stroke-width="1.050"><path d="M713.5 446.2A4.5 4.5 0 0 1 721.7 443.4"/><path d="M722.5 445.8A4.5 4.5 0 0 1 714.3 448.6"/><circle cx="713.600" cy="445.700" r=".9" fill="#3a22c8" stroke="none"/><circle cx="722.400" cy="446.300" r=".9" fill="#3a22c8" stroke="none"/></svg>
  <!-- red arrow -->
  <svg class="abs" style="left:130px;top:390px" width="160" height="32" viewBox="820 450 160 32"><path d="M971.200 457.200L846 469.600" stroke="#ee1c1c" stroke-width="2.600" stroke-linecap="round" fill="none"/><path d="M830.800 472.200l15.800-7.400 1.800 11.800z" fill="#ee1c1c"/></svg>
  <!-- help icon -->
  <svg class="abs" style="left:22px;top:790px" width="14" height="14" viewBox="712 850 14 14"><circle cx="719" cy="857" r="6" fill="none" stroke="#52627b" stroke-width="1"/><text x="719" y="859.500" text-anchor="middle" font-family="'Liberation Sans',sans-serif" font-weight="bold" font-size="6.800" fill="#52627b">?</text></svg>
  <!-- refresh -->
  <div class="t lk" id="m_rf" style="left:41.2px;top:377.7px;font-size:11.7px;line-height:11.7px;letter-spacing:-0.3px;transform:scaleX(0.971);transform-origin:0 50%">Làm mới danh sách</div>

  <div class="t sec" id="m_s2" style="left:21.7px;top:407.8px;font-size:13.5px;line-height:13.5px;letter-spacing:-0.3px;transform:scaleX(0.894);transform-origin:0 50%">Trường thông tin</div>
  <div class="t lab" id="m_l3" style="left:21.7px;top:428.7px;font-size:11.7px;line-height:11.7px;letter-spacing:-0.3px;transform:scaleX(0.989);transform-origin:0 50%">Thông tin khách hàng trong thanh toán</div>

  <!-- table -->
  <div class="box" id="tbl" style="left:22px;top:453px;width:496px;height:219px;overflow:hidden">
    <div class="abs" style="left:0;top:0;width:494px;height:33px;background:#fafafc"></div>
    <div class="rowline" style="top:32px"></div>
    <div class="rowline" style="top:69px"></div>
    <div class="rowline" style="top:106px"></div>
    <div class="rowline" style="top:143px"></div>
    <div class="rowline" style="top:180px"></div>
  </div>
  <div class="t th" id="m_t1" style="left:36.8px;top:463.4px;font-size:11.7px;line-height:11.7px;letter-spacing:-0.3px;transform:scaleX(0.945);transform-origin:0 50%">Tên trường</div>
  <div class="t th" id="m_t2" style="left:284.2px;top:463.4px;font-size:11.7px;line-height:11.7px;letter-spacing:-0.25px;transform:scaleX(0.997);transform-origin:0 50%">Hiển thị</div>
  <div class="t th" id="m_t3" style="left:405.3px;top:463.4px;font-size:11.7px;line-height:11.7px;letter-spacing:-0.3px;transform:scaleX(0.965);transform-origin:0 50%">Bắt buộc nhập</div>
  <div class="t td" id="m_r1" style="left:36.8px;top:498.1px;font-size:11.7px;line-height:11.7px;letter-spacing:-0.3px;transform:scaleX(0.956);transform-origin:0 50%">Họ tên</div>
  <div class="t td" id="m_r2" style="left:36.8px;top:535.1px;font-size:11.7px;line-height:11.7px;letter-spacing:-0.3px;transform:scaleX(0.97);transform-origin:0 50%">Số điện thoại</div>
  <div class="t td" id="m_r3" style="left:36.8px;top:572.1px;font-size:11.7px;line-height:11.7px;letter-spacing:-0.3px;transform:scaleX(0.931);transform-origin:0 50%">Email</div>
  <div class="t td" id="m_r4" style="left:36.8px;top:609.3px;font-size:11.7px;line-height:11.7px;letter-spacing:-0.3px;transform:scaleX(0.938);transform-origin:0 50%">Ghi chú</div>
  <div class="t td" id="m_r5" style="left:36.8px;top:646.4px;font-size:11.7px;line-height:11.7px;letter-spacing:-0.3px;transform:scaleX(0.958);transform-origin:0 50%">Địa chỉ</div>
  <div class="cb2" style="left:296px;top:498px"></div><div class="cb2" style="left:433px;top:498px"></div>
  <div class="cb2" style="left:296px;top:535px"></div><div class="cb2" style="left:433px;top:535px"></div>
  <div class="cb2" style="left:296px;top:572px"></div><div class="cb2" style="left:433px;top:572px"></div>
  <div class="cb2" style="left:296px;top:609px"></div><div class="cb2" style="left:433px;top:609px"></div>
  <div class="cb2" style="left:296px;top:646px"></div><div class="cb2" style="left:433px;top:646px"></div>

  <div class="t sec" id="m_s3" style="left:21.7px;top:688.5px;font-size:13.5px;line-height:13.5px;letter-spacing:-0.3px;transform:scaleX(0.903);transform-origin:0 50%">Trang xác nhận đơn hàng</div>
  <div class="abs" id="sel" style="left:22px;top:711px;width:496px;height:32px;border:1px solid #efeff3;background:#fff"></div>
  <div class="t" id="m_sel" style="left:37.2px;top:719.7px;font-size:13.33px;line-height:13.33px;letter-spacing:0.02px;transform:scaleX(0.999);transform-origin:0 50%;color:#555">Trang mặc định</div>
  <svg class="abs" style="left:498.400px;top:726px" width="6.600" height="5" viewBox="0 0 6.600 5"><path d="M0 0h6.600L3.300 5z" fill="#566078"/></svg>

  <div class="hr" style="top:761px"></div>

  <!-- footer -->
  <div class="t" id="m_help" style="left:43.8px;top:790.2px;font-size:13.5px;line-height:13.5px;letter-spacing:-0.3px;transform:scaleX(0.971);transform-origin:0 50%;color:#52627b">Tìm hiểu thêm</div>
  <div class="abs" id="btn1" style="left:321px;top:780px;width:85px;height:33px;background:#f2f3f5;border-radius:2px"></div>
  <div class="t" id="m_b1" style="left:342.3px;top:789.9px;font-size:13.5px;line-height:13.5px;letter-spacing:-0.2px;transform:scaleX(0.998);transform-origin:0 50%;color:#1a1a1a">Huỷ bỏ</div>
  <div class="abs" id="btn2" style="left:423px;top:780px;width:95px;height:33px;background:#1c00c2;border-radius:2px"></div>
  <div class="t" id="m_b2" style="left:445.1px;top:789.9px;font-size:13.5px;line-height:13.5px;letter-spacing:-0.3px;transform:scaleX(0.992);transform-origin:0 50%;color:#fff;font-weight:bold">Hoàn tất</div>
</div>

</body>
</html>
